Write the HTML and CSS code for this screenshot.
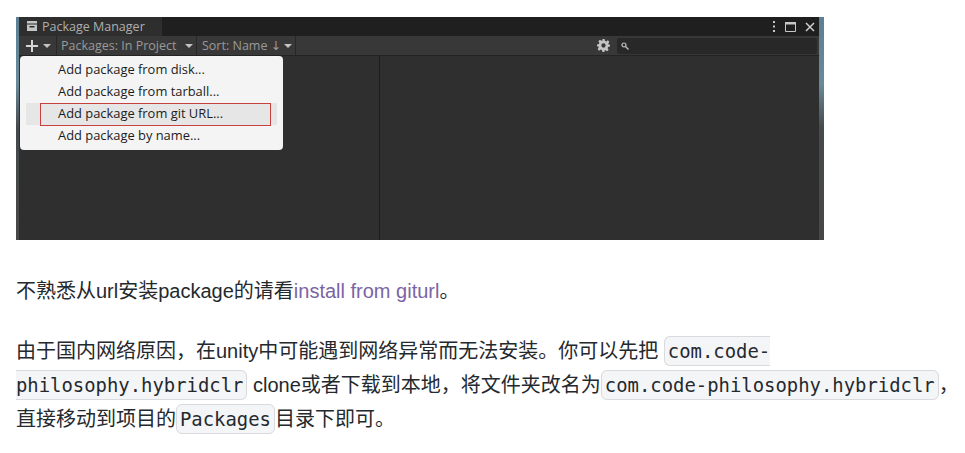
FILE: index.html
```html
<!DOCTYPE html>
<html lang="zh-CN">
<head>
    <meta charset="UTF-8">
    <meta name="viewport" content="width=device-width, initial-scale=1.0">
    <title>Package Manager</title>
    <link rel="stylesheet" href="styles.css">
</head>
<body>
    <div class="shot">
        <div class="titlebar">
            <div class="tab">
                <svg class="tab-icon" width="12" height="11" viewBox="0 0 12 11"><path d="M1 0h10v2.500H1zM1 3.500h10V10H1z" fill="#c4c4c4"/><path d="M3.500 5h5v1.500h-5z" fill="#2c2c2c"/></svg>
                <span>Package Manager</span>
            </div>
            <div class="win-controls">
                <svg width="4" height="11" viewBox="0 0 4 11"><path d="M1 0h2v2H1zM1 4.500h2v2H1zM1 9h2v2H1z" fill="#c8c8c8"/></svg>
                <svg width="11" height="10" viewBox="0 0 11 10"><path d="M.5 .5h10v9H.5z" fill="none" stroke="#c8c8c8"/><path d="M0 0h11v2.500H0z" fill="#c8c8c8"/></svg>
                <svg width="10" height="10" viewBox="0 0 10 10"><path d="M1 1l8 8M9 1l-8 8" stroke="#d0d0d0" stroke-width="1.500" fill="none"/></svg>
            </div>
        </div>
        <div class="toolbar">
            <div class="tool tool-add">
                <svg width="12" height="12" viewBox="0 0 12 12"><path d="M5 0h2v5h5v2H7v5H5V7H0V5h5z" fill="#d6d6d6"/></svg>
                <i class="caret"></i>
            </div>
            <div class="tool tool-filter">Packages: In Project <i class="caret"></i></div>
            <div class="tool tool-sort">Sort: Name <span class="sort-arrow">↓</span> <i class="caret"></i></div>
            <div class="tool-spacer"></div>
            <svg class="gear" width="13" height="13" viewBox="0 0 24 24"><path fill="#c4c4c4" fill-rule="evenodd" d="M10 0h4l.7 3.400 2.300 1 3-1.900 2.800 2.800-1.900 3 1 2.300L24 10v4l-3.400.7-1 2.300 1.900 3-2.800 2.800-3-1.900-2.300 1L14 24h-4l-.7-3.400-2.300-1-3 1.900-2.800-2.800 1.900-3-1-2.300L0 14v-4l3.400-.7 1-2.300-1.900-3 2.800-2.800 3 1.900 2.300-1zM12 8a4 4 0 100 8 4 4 0 000-8z"/></svg>
            <div class="search">
                <svg width="8" height="8" viewBox="0 0 8 8"><circle cx="3" cy="3" r="2" fill="none" stroke="#c4c4c4" stroke-width="1.200"/><path d="M4.500 4.500L7.500 7.500" stroke="#c4c4c4" stroke-width="1.300"/></svg>
            </div>
        </div>
        <div class="panes">
            <div class="pane-list"></div>
            <div class="pane-detail"></div>
        </div>
        <ul class="menu">
            <li>Add package from disk...</li>
            <li>Add package from tarball...</li>
            <li class="active"><span class="red-box"></span>Add package from git URL...</li>
            <li>Add package by name...</li>
        </ul>
    </div>

    <p class="first">不熟悉从url安装package的请看<a href="#">install from giturl</a>。</p>
    <p>由于国内网络原因，在unity中可能遇到网络异常而无法安装。你可以先把 <code>com.code-philosophy.hybridclr</code> clone或者下载到本地，将文件夹改名为<code>com.code-philosophy.hybridclr</code>，直接移动到项目的<code>Packages</code>目录下即可。</p>
</body>
</html>
```

FILE: styles.css
```css
body {
    margin: 0;
    padding: 17px 0 0 16px;
    width: 947px;
    background-color: #fff;
    color: #24292e;
    font-family: "Liberation Sans", "Noto Sans CJK SC", sans-serif;
    font-size: 20px;
    line-height: 34px;
    overflow: hidden;
}
p {
    margin: 0 0 26px;
}
.first {
    margin-top: 34px;
}
a {
    color: #7b64a4;
    text-decoration: none;
}
code {
    font-family: "DejaVu Sans Mono", monospace;
    font-size: 18.900px;
    padding: 3px;
    background-color: #f4f5f7;
    border: 1px solid #d8dadd;
    border-radius: 6px;
}

/* unity window */
.shot {
    position: relative;
    width: 808px;
    height: 223px;
    box-sizing: border-box;
    padding: 0 5px 0 3px;
    background: linear-gradient(#5d7f93, #6a8a9a 30%, #454a4c 50%, #474747);
    font-family: "Open Sans", sans-serif;
    font-size: 12.500px;
    line-height: 19px;
    color: #9a9a9a;
}
.titlebar {
    display: flex;
    justify-content: space-between;
    height: 19px;
    background-color: #1f1f1f;
}
.tab {
    display: flex;
    align-items: center;
    gap: 4px;
    width: 143px;
    padding-left: 7px;
    box-sizing: border-box;
    background-color: #2e2e2e;
    color: #aeaeae;
}
.win-controls {
    display: flex;
    align-items: center;
    gap: 9px;
    padding-right: 4px;
}
.toolbar {
    display: flex;
    align-items: center;
    height: 20px;
    background-color: #383838;
    border-bottom: 1px solid #232323;
    box-sizing: border-box;
}
.tool {
    display: flex;
    align-items: center;
    gap: 5px;
    height: 100%;
    border-right: 1px solid #282828;
    box-sizing: border-box;
}
.tool-add {
    width: 38px;
    padding-left: 7px;
}
.tool-filter {
    width: 140px;
    padding-left: 4px;
    gap: 9px;
    white-space: nowrap;
}
.tool-sort {
    width: 99px;
    padding-left: 5px;
    gap: 3px;
    white-space: nowrap;
}
.sort-arrow {
    font-family: "DejaVu Sans", sans-serif;
}
.tool-spacer {
    flex: 1;
}
.caret {
    width: 0;
    height: 0;
    border-left: 4px solid transparent;
    border-right: 4px solid transparent;
    border-top: 4px solid #c4c4c4;
}
.gear {
    margin-right: 7px;
}
.search {
    display: flex;
    align-items: center;
    width: 200px;
    height: 16px;
    margin-right: 2px;
    padding-left: 4px;
    box-sizing: border-box;
    background-color: #282828;
    border-radius: 2px;
}
.panes {
    display: flex;
    height: 184px;
    background-color: #2f2f2f;
}
.pane-list {
    width: 360px;
    border-right: 1px solid #1c1c1c;
}
.pane-detail {
    flex: 1;
}

/* add menu, sits over the package list */
.menu {
    position: absolute;
    left: 4px;
    top: 39px;
    width: 263px;
    margin: 0;
    padding: 3px 6px;
    box-sizing: border-box;
    list-style: none;
    background-color: #f4f4f4;
    border-radius: 4px;
    color: #1c1c1c;
    font-size: 12.900px;
    line-height: 20px;
}
.menu li {
    position: relative;
    padding: 0 0 2px 32px;
}
.menu .active {
    background-color: #e6e6e6;
}
.red-box {
    position: absolute;
    left: 14px;
    right: 6px;
    top: 0;
    bottom: -1px;
    border: 1px solid #c8403f;
}
```
